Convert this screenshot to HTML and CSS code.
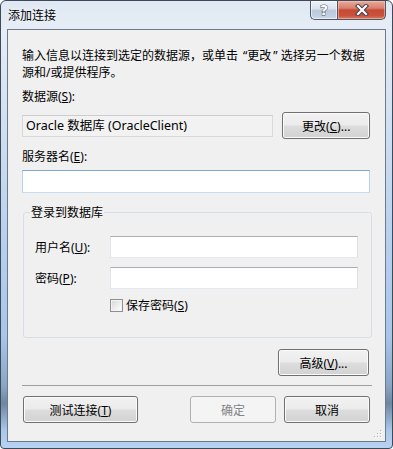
FILE: index.html
```html
<!DOCTYPE html>
<html lang="zh-CN">
<head>
<meta charset="utf-8">
<title>添加连接</title>
<link rel="stylesheet" href="styles.css">
</head>
<body>
<div class="window">
  <div class="titlebar">
    <span class="title">添加连接</span>
    <div class="caption-btns">
      <div class="cbtn help"><span class="qmark">?</span></div>
      <div class="cbtn close">
        <svg width="14" height="12" viewBox="0 0 14 12">
          <path d="M3 2 L11 10 M11 2 L3 10" stroke="#3b4150" stroke-width="4.2" stroke-linecap="square" fill="none"/>
          <path d="M3 2 L11 10 M11 2 L3 10" stroke="#ffffff" stroke-width="2.2" stroke-linecap="square" fill="none"/>
        </svg>
      </div>
    </div>
  </div>
  <div class="client">
    <p class="intro">输入信息以连接到选定的数据源，或单击<span class="q-open">“</span>更改<span class="q-close">”</span>选择另一个数据<br>源和/或提供程序。</p>
    <div class="label">数据源(<u>S</u>):</div>
    <div class="source-row">
      <div class="readonly">Oracle 数据库 (OracleClient)</div>
      <button class="btn change">更改(<u>C</u>)...</button>
    </div>
    <div class="label server-label">服务器名(<u>E</u>):</div>
    <input class="textbox server" type="text">
    <fieldset class="group">
      <legend>登录到数据库</legend>
      <div class="login-grid">
        <label class="field-label">用户名(<u>U</u>):</label>
        <input class="textbox" type="text">
        <label class="field-label">密码(<u>P</u>):</label>
        <input class="textbox" type="password">
        <span></span>
        <label class="check"><span class="checkbox"></span><span class="check-text">保存密码(<u>S</u>)</span></label>
      </div>
    </fieldset>
    <div class="adv-row"><button class="btn adv">高级(<u>V</u>)...</button></div>
    <div class="sep"></div>
    <div class="footer">
      <button class="btn test">测试连接(<u>T</u>)</button>
      <div class="footer-right">
        <button class="btn ok" disabled>确定</button>
        <button class="btn cancel">取消</button>
      </div>
    </div>
    <svg class="grip" width="8" height="8" viewBox="0 0 8 8">
      <rect x="6" y="0" width="1" height="1" fill="#b8b8b8"/>
      <rect x="3" y="3" width="1" height="1" fill="#b8b8b8"/>
      <rect x="6" y="3" width="1" height="1" fill="#b8b8b8"/>
      <rect x="0" y="6" width="1" height="1" fill="#b8b8b8"/>
      <rect x="3" y="6" width="1" height="1" fill="#b8b8b8"/>
      <rect x="6" y="6" width="1" height="1" fill="#b8b8b8"/>
      <rect x="7" y="1" width="1" height="1" fill="#ffffff"/>
      <rect x="4" y="4" width="1" height="1" fill="#ffffff"/>
      <rect x="7" y="4" width="1" height="1" fill="#ffffff"/>
      <rect x="1" y="7" width="1" height="1" fill="#ffffff"/>
      <rect x="4" y="7" width="1" height="1" fill="#ffffff"/>
      <rect x="7" y="7" width="1" height="1" fill="#ffffff"/>
    </svg>
  </div>
</div>
</body>
</html>
```
FILE: styles.css
```css
html, body {
  margin: 0;
  padding: 0;
  background: #ffffff;
}
body {
  font-family: "Noto Sans", "Noto Sans CJK SC", sans-serif;
  font-size: 12px;
  color: #000;
}
.window {
  width: 393px;
  height: 449px;
  box-sizing: border-box;
  border: 1px solid #3e4a58;
  border-radius: 6px 6px 4px 4px;
  padding: 0 6px 6px 6px;
  display: flex;
  flex-direction: column;
  background: linear-gradient(to bottom,
    #dfe8f3 0%, #e6edf6 6%, #d8e4f2 20%, #c9dbf0 35%,
    #b6cfee 55%, #a8c6ea 75%, #8aa6c4 86%, #6f86a0 90%, #a9c7eb 96%, #b8d2f0 100%);
  overflow: hidden;
}
.titlebar {
  height: 28px;
  flex: none;
  display: flex;
  justify-content: space-between;
  align-items: flex-start;
}
.title {
  padding-left: 1px;
  margin-top: 5px;
  line-height: 17px;
  font-size: 12px;
  font-family: "Noto Sans CJK SC", sans-serif;
  text-shadow: 0 0 6px rgba(255,255,255,0.9);
}
.caption-btns {
  display: flex;
  height: 19px;
}
.cbtn {
  height: 18px;
  border: 1px solid #4d5867;
  border-top: none;
  display: flex;
  align-items: center;
  justify-content: center;
  box-sizing: content-box;
}
.help {
  width: 26px;
  border-right: none;
  border-radius: 0 0 0 5px;
  background: linear-gradient(to bottom, #edf2f8 0%, #d9e3ee 45%, #b9c8da 50%, #c8d6e6 100%);
  box-shadow: inset 0 0 0 1px rgba(255,255,255,0.6);
}
.qmark {
  font-family: "DejaVu Sans", sans-serif;
  font-weight: bold;
  font-size: 14px;
  line-height: 14px;
  color: #ffffff;
  -webkit-text-stroke: 1px #4a5262;
  paint-order: stroke fill;
}
.close {
  width: 47px;
  border-radius: 0 0 5px 0;
  background: linear-gradient(to bottom, #e9a99b 0%, #d8806c 40%, #c54a35 50%, #c9513a 80%, #d87b5f 100%);
  box-shadow: inset 0 0 0 1px rgba(255,210,200,0.5);
}
.client {
  flex: 1;
  position: relative;
  border: 1px solid #6b7a8c;
  background: #f0f0f0;
  padding: 17px 15px 0 14px;
}
.intro {
  margin: 0;
  line-height: 17px;
  white-space: nowrap;
}
.q-open {
  padding-left: 5px;
}
.q-close {
  padding-left: 2px;
  padding-right: 3px;
}
.label {
  margin-top: 7px;
  line-height: 17px;
}
.server-label {
  margin-top: 9px;
}
.source-row {
  display: flex;
  align-items: center;
  gap: 9px;
  margin-top: 7px;
}
.readonly {
  width: 252px;
  height: 22px;
  box-sizing: border-box;
  border: 1px solid #d9d9d9;
  border-top-color: #cdcdcd;
  background: #f2f2f2;
  padding-left: 3px;
  line-height: 20px;
  font-size: 12.5px;
}
.btn {
  font: inherit;
  font-size: 12px;
  color: #000;
  height: 27px;
  box-sizing: border-box;
  border: 1px solid #707070;
  border-radius: 3px;
  background: linear-gradient(to bottom, #f2f2f2 0%, #ebebeb 49%, #dddddd 51%, #d2d2d2 100%);
  box-shadow: inset 0 0 0 1px #fbfbfb;
  padding: 0;
}
.change {
  width: 88px;
}
.textbox {
  display: block;
  box-sizing: border-box;
  height: 22px;
  border: 1px solid;
  border-color: #abadb3 #dbdfe6 #e3e9ef #e2e3ea;
  background: #ffffff;
  margin: 0;
  padding: 0 3px;
  outline: none;
}
.server {
  width: 348px;
  height: 23px;
  margin-top: 5px;
  border-color: #7fa9d6 #b7d2ee #c5dcf2 #b7d2ee;
}
.group {
  margin: 11px -2px 0 1px;
  padding: 0 13px 0 11px;
  border: 1px solid #d5dfe5;
  border-radius: 3px;
  height: 134px;
  box-sizing: border-box;
}
.group legend {
  margin-left: -5px;
  padding: 0 1px;
  line-height: 17px;
}
.login-grid {
  display: grid;
  grid-template-columns: 75px 248px;
  row-gap: 9px;
  align-items: center;
  margin-top: 15px;
}
.field-label {
  line-height: 17px;
}
.check {
  display: flex;
  align-items: center;
  gap: 3px;
  line-height: 17px;
  margin-top: -1px;
}
.checkbox {
  width: 13px;
  height: 13px;
  box-sizing: border-box;
  border: 1px solid #8e8f8f;
  background: linear-gradient(135deg, #d6d6d6 0%, #f4f4f4 70%, #ffffff 100%);
  box-shadow: inset 0 0 0 1px #f3f3f3;
}
.adv-row {
  display: flex;
  justify-content: flex-end;
  margin-top: 11px;
}
.adv {
  width: 91px;
  margin-right: 1px;
}
.sep {
  height: 1px;
  background: #a0a0a0;
  margin: 9px -2px 0 0;
}
.footer {
  display: flex;
  justify-content: space-between;
  margin-top: 10px;
}
.test {
  width: 115px;
  margin-left: 1px;
}
.footer-right {
  display: flex;
  gap: 8px;
}
.ok {
  width: 86px;
  color: #838383;
  border-color: #adb2b5;
  background: #f4f4f4;
  box-shadow: none;
}
.cancel {
  width: 86px;
}
.grip {
  position: absolute;
  right: 3px;
  bottom: 3px;
}
u {
  text-decoration: underline;
  text-underline-offset: 1px;
}
```
